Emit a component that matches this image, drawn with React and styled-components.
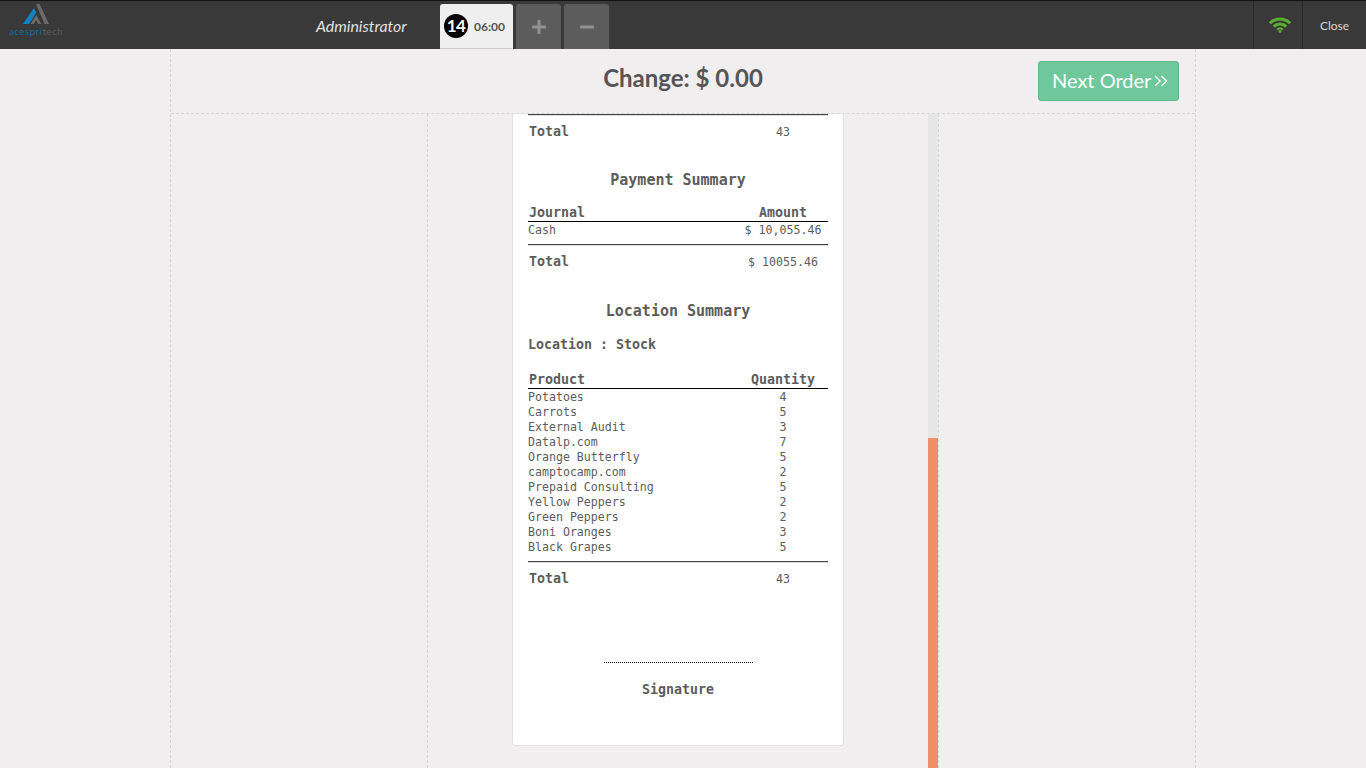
import React from 'react';
import styled, { createGlobalStyle } from 'styled-components';
import { FaPlus, FaMinus } from 'react-icons/fa';
import { ChevronsRight } from 'lucide-react';

const GlobalStyle = createGlobalStyle`
  html, body {
    margin: 0;
    height: 100%;
    overflow: hidden;
    background: #f0eeee;
  }
  * {
    box-sizing: border-box;
  }
`;

const Page = styled.div`
  height: 100vh;
  display: flex;
  flex-direction: column;
  font-family: Lato, sans-serif;
`;

/* Top bar */
const TopBar = styled.header`
  height: 49px;
  flex: none;
  display: flex;
  background: #393939;
  border-top: 1px solid #111;
`;

const Logo = styled.div`
  width: 316px;
  padding: 3px 0 0 9px;
  display: flex;
  flex-direction: column;
`;

const LogoMark = styled.svg`
  width: 26px;
  height: 21px;
  margin-left: 14px;
`;

const LogoText = styled.div`
  font-size: 10px;
  line-height: 12px;
  letter-spacing: 0.35px;
  color: #0a6c9f;
  span {
    color: #5a5a5a;
  }
`;

const UserName = styled.div`
  width: 124px;
  font-size: 15.9px;
  font-style: italic;
  line-height: 50px;
  color: #e0e0e0;
`;

const Tabs = styled.div`
  display: flex;
  gap: 3px;
  padding-top: 3px;
`;

const OrderTab = styled.div`
  width: 73px;
  display: flex;
  align-items: center;
  gap: 6px;
  padding-left: 4px;
  background: #efefef;
  border-bottom: 1px solid #ccc;
  border-radius: 3px 3px 0 0;
`;

const Badge = styled.span`
  width: 24px;
  height: 24px;
  border-radius: 50%;
  background: #000;
  color: #fff;
  font-size: 17px;
  font-weight: 700;
  line-height: 24px;
  letter-spacing: -0.5px;
  text-align: center;
`;

const OrderTime = styled.span`
  font-size: 12px;
  font-weight: 700;
  color: #555;
`;

const TabButton = styled.div`
  width: 45px;
  display: flex;
  align-items: center;
  justify-content: center;
  background: #5c5c5c;
  color: #919191;
  font-size: 16px;
  border-radius: 3px 3px 0 0;
`;

const Status = styled.div`
  margin-left: auto;
  display: flex;
`;

const StatusItem = styled.div`
  width: ${(p) => p.$width}px;
  display: flex;
  align-items: center;
  justify-content: center;
  padding-left: ${(p) => p.$indent || 0}px;
  border-left: 1px solid #292929;
  color: #d8d8d8;
  font-size: 12px;
`;

const WifiIcon = styled.svg`
  width: 22px;
  height: 16px;
  fill: none;
  stroke: #5cb030;
  stroke-width: 3;
`;

/* Work area */
const Screen = styled.main`
  width: 1026px;
  margin: 0 auto;
  flex: 1;
  min-height: 0;
  display: flex;
  flex-direction: column;
  border-left: 1px dashed #d5d5d5;
  border-right: 1px dashed #d5d5d5;
`;

const TopLine = styled.div`
  height: 65px;
  flex: none;
  position: relative;
  display: flex;
  justify-content: center;
  border-bottom: 1px dashed #d5d5d5;
`;

const Change = styled.div`
  font-size: 24px;
  font-weight: 700;
  line-height: 58px;
  color: #555;
`;

const NextButton = styled.div`
  position: absolute;
  top: 12px;
  right: 16px;
  width: 141px;
  height: 40px;
  padding: 0 0 2px 13px;
  display: flex;
  align-items: center;
  background: #6ec89b;
  border: 1px solid #62b88c;
  border-radius: 3px;
  color: #fff;
  font-size: 20px;
  svg {
    width: 22px;
    height: 22px;
    margin: 2px 0 0 -1px;
  }
`;

const Columns = styled.div`
  flex: 1;
  min-height: 0;
  display: grid;
  grid-template-columns: 257px 511px 1fr;
`;

const LeftPane = styled.div`
  border-right: 1px dashed #d5d5d5;
`;

const ReceiptPane = styled.div`
  display: flex;
  min-height: 0;
  border-right: 1px dashed #d5d5d5;
`;

const ReceiptArea = styled.div`
  flex: 1;
  display: flex;
  justify-content: center;
  align-items: flex-start;
`;

const Scrollbar = styled.div`
  width: 10px;
  flex: none;
  display: flex;
  flex-direction: column;
  background: #e6e6e6;
`;

const Thumb = styled.div`
  margin-top: auto;
  height: 330px;
  background: #f08f67;
`;

/* Receipt */
const Receipt = styled.div`
  width: 332px;
  height: 632px;
  padding: 0 15px;
  background: #fff;
  border: 1px solid #e2e2e2;
  border-top: 0;
  border-radius: 0 0 3px 3px;
  font-family: 'DejaVu Sans Mono', 'Liberation Mono', monospace;
  font-size: 11.6px;
  line-height: 15px;
  color: #5c5c5c;
`;

const Rule = styled.div`
  height: 1px;
  background: #444;
  box-shadow: 0 1px 0 #ddd;
`;

const Row = styled.div`
  display: grid;
  grid-template-columns: 1fr 90px;
`;

const HeadRow = styled(Row)`
  padding: 0 0 1px 1px;
  font-size: 13.3px;
  font-weight: 700;
  line-height: 14px;
  border-bottom: 1px solid #000;
  margin-top: ${(p) => p.$top}px;
`;

const TotalRow = styled(Row)`
  padding-left: 1px;
  margin-top: 9px;
  font-weight: 700;
  font-size: 13.3px;
  line-height: 16px;
`;

const Value = styled.div`
  text-align: center;
`;

const PlainValue = styled(Value)`
  font-size: 11.6px;
  font-weight: 400;
`;

const Lines = styled.div`
  padding-top: 1px;
  margin-bottom: 6px;
`;

const SectionTitle = styled.div`
  margin-top: ${(p) => p.$top}px;
  font-size: 15px;
  font-weight: 700;
  line-height: 18px;
  text-align: center;
`;

const LocationName = styled.div`
  margin-top: 17px;
  font-size: 13.3px;
  font-weight: 700;
  line-height: 16px;
`;

const SignatureLine = styled.div`
  width: 149px;
  margin: 75px auto 0;
  border-top: 1px dotted #000;
`;

const SignatureLabel = styled.div`
  margin-top: 19px;
  font-size: 13.3px;
  font-weight: 700;
  line-height: 16px;
  text-align: center;
`;

const products = [
  ['Potatoes', 4],
  ['Carrots', 5],
  ['External Audit', 3],
  ['Datalp.com', 7],
  ['Orange Butterfly', 5],
  ['camptocamp.com', 2],
  ['Prepaid Consulting', 5],
  ['Yellow Peppers', 2],
  ['Green Peppers', 2],
  ['Boni Oranges', 3],
  ['Black Grapes', 5],
];

export default function App() {
  return (
    <Page>
      <GlobalStyle />
      <TopBar>
        <Logo>
          <LogoMark viewBox="0 0 26 21">
            <path d="M13 0h3.5L26 20h-4.5z" fill="#6a6a6a" />
            <path d="M11 4l2.2 4.4L6 20H0z" fill="#0f84c4" />
            <path d="M13 11l5.5 9h-3.2L13 16l-2.3 4H7.5z" fill="#6a6a6a" />
          </LogoMark>
          <LogoText>
            acespri<span>tech</span>
          </LogoText>
        </Logo>
        <UserName>Administrator</UserName>
        <Tabs>
          <OrderTab>
            <Badge>14</Badge>
            <OrderTime>06:00</OrderTime>
          </OrderTab>
          <TabButton>
            <FaPlus />
          </TabButton>
          <TabButton>
            <FaMinus />
          </TabButton>
        </Tabs>
        <Status>
          <StatusItem $width={49} $indent={3}>
            <WifiIcon viewBox="0 0 22 16">
              <path d="M1 6.2C6.5 .6 15.5 .6 21 6.2" />
              <path d="M4.8 9.6C8.2 6.2 13.8 6.2 17.2 9.6" />
              <path d="M8.2 12.6C9.8 11.2 12.2 11.2 13.8 12.6" strokeWidth="2.4" />
              <circle cx="11" cy="14.6" r="1.4" fill="#5cb030" stroke="none" />
            </WifiIcon>
          </StatusItem>
          <StatusItem $width={64}>Close</StatusItem>
        </Status>
      </TopBar>
      <Screen>
        <TopLine>
          <Change>Change: $ 0.00</Change>
          <NextButton>
            Next Order
            <ChevronsRight strokeWidth={1.5} />
          </NextButton>
        </TopLine>
        <Columns>
          <LeftPane />
          <ReceiptPane>
            <ReceiptArea>
              <Receipt>
                <Rule />
                <TotalRow>
                  <div>Total</div>
                  <PlainValue>43</PlainValue>
                </TotalRow>

                <SectionTitle $top={31}>Payment Summary</SectionTitle>
                <HeadRow $top={17}>
                  <div>Journal</div>
                  <Value>Amount</Value>
                </HeadRow>
                <Lines>
                  <Row>
                    <div>Cash</div>
                    <Value>$ 10,055.46</Value>
                  </Row>
                </Lines>
                <Rule />
                <TotalRow>
                  <div>Total</div>
                  <PlainValue>$ 10055.46</PlainValue>
                </TotalRow>

                <SectionTitle $top={32}>Location Summary</SectionTitle>
                <LocationName>Location : Stock</LocationName>
                <HeadRow $top={20}>
                  <div>Product</div>
                  <Value>Quantity</Value>
                </HeadRow>
                <Lines>
                  {products.map(([name, qty]) => (
                    <Row key={name}>
                      <div>{name}</div>
                      <Value>{qty}</Value>
                    </Row>
                  ))}
                </Lines>
                <Rule />
                <TotalRow>
                  <div>Total</div>
                  <PlainValue>43</PlainValue>
                </TotalRow>

                <SignatureLine />
                <SignatureLabel>Signature</SignatureLabel>
              </Receipt>
            </ReceiptArea>
            <Scrollbar>
              <Thumb />
            </Scrollbar>
          </ReceiptPane>
          <div />
        </Columns>
      </Screen>
    </Page>
  );
}
